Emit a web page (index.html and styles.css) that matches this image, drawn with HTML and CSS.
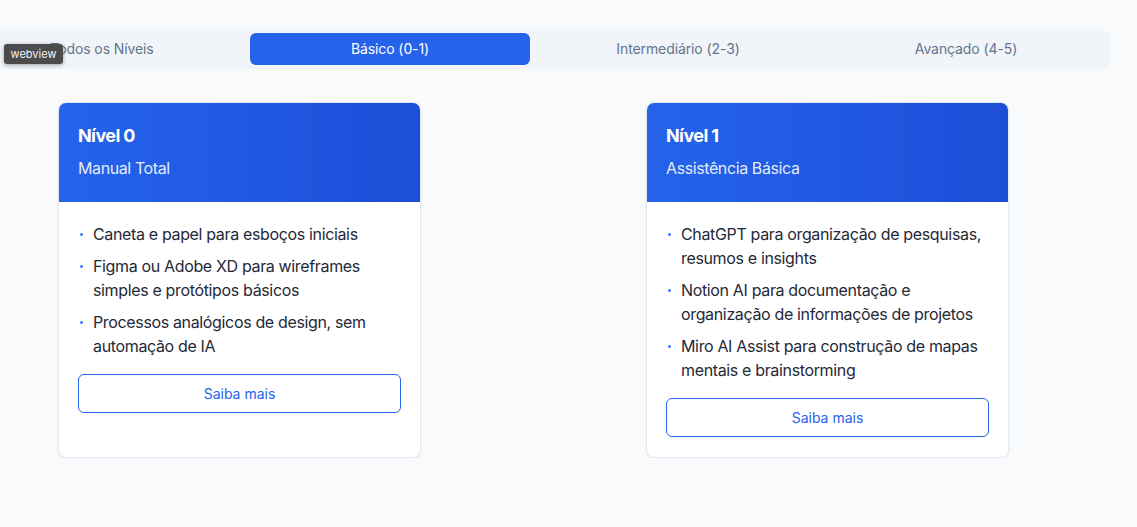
FILE: index.html
```html
<!DOCTYPE html>
<html lang="pt-BR">
<head>
<meta charset="utf-8">
<title>Níveis</title>
<link rel="stylesheet" href="styles.css">
</head>
<body>
<div class="page">
  <nav class="tabs">
    <button class="tab">Todos os Níveis</button>
    <button class="tab active">Básico (0-1)</button>
    <button class="tab">Intermediário (2-3)</button>
    <button class="tab">Avançado (4-5)</button>
  </nav>
  <span class="badge">webview</span>
  <section class="cards">
    <article class="card">
      <header class="card-head">
        <h2 class="card-title">Nível 0</h2>
        <p class="card-sub">Manual Total</p>
      </header>
      <div class="card-body">
        <ul class="list">
          <li>Caneta e papel para esboços iniciais</li>
          <li>Figma ou Adobe XD para wireframes simples e protótipos básicos</li>
          <li>Processos analógicos de design, sem automação de IA</li>
        </ul>
        <button class="more">Saiba mais</button>
      </div>
    </article>
    <article class="card">
      <header class="card-head">
        <h2 class="card-title">Nível 1</h2>
        <p class="card-sub">Assistência Básica</p>
      </header>
      <div class="card-body">
        <ul class="list">
          <li>ChatGPT para organização de pesquisas, resumos e insights</li>
          <li>Notion AI para documentação e organização de informações de projetos</li>
          <li>Miro AI Assist para construção de mapas mentais e brainstorming</li>
        </ul>
        <button class="more">Saiba mais</button>
      </div>
    </article>
  </section>
</div>
</body>
</html>
```

FILE: styles.css
```css
* { box-sizing: border-box; }
html, body {
  margin: 0;
  padding: 0;
  background: #f8fafc;
  font-family: Inter, "Noto Sans", sans-serif;
  overflow: hidden;
}
.page {
  position: relative;
  padding-top: 29px;
}
.tabs {
  display: flex;
  gap: 8px;
  width: 1152px;
  margin-left: -42px;
  padding: 4px;
  background: #f1f5f9;
  border-radius: 8px;
}
.tab {
  flex: 1;
  height: 32px;
  padding: 0 0 2px;
  border: 0;
  border-radius: 6px;
  background: transparent;
  font-family: inherit;
  font-size: 14px;
  letter-spacing: -0.1px;
  color: #64748b;
  cursor: pointer;
}
.tab.active {
  background: #2563eb;
  color: #ffffff;
}
.badge {
  position: absolute;
  left: 4px;
  top: 44px;
  width: 59px;
  height: 20px;
  line-height: 20px;
  text-align: center;
  background: #4b4b4b;
  color: #f2f2f2;
  font-size: 11px;
  border-radius: 3px;
  box-shadow: 0 1px 4px rgba(0,0,0,0.35);
}
.cards {
  display: grid;
  grid-template-columns: 363px 363px;
  column-gap: 225px;
  align-items: stretch;
  margin-top: 33px;
  padding-left: 58px;
}
.card {
  display: flex;
  flex-direction: column;
  background: #ffffff;
  border: 1px solid #e2e8f0;
  border-radius: 8px;
  overflow: hidden;
  box-shadow: 0 1px 3px rgba(15, 23, 42, 0.06);
}
.card-head {
  height: 100px;
  margin: -1px -1px 0;
  padding: 20px 20px 0;
  background: linear-gradient(90deg, #2563eb 0%, #1d4ed8 100%);
  color: #ffffff;
}
.card-title {
  margin: 0;
  font-size: 18px;
  line-height: 28px;
  font-weight: 700;
  letter-spacing: -0.6px;
}
.card-sub {
  margin: 6px 0 0;
  font-size: 16px;
  line-height: 24px;
  letter-spacing: -0.4px;
  color: rgba(255,255,255,0.9);
}
.card-body {
  padding: 20px 19px 20px 19px;
}
.list {
  list-style: none;
  margin: 0;
  padding: 0;
  display: flex;
  flex-direction: column;
  gap: 8px;
}
.list li {
  position: relative;
  padding-left: 15px;
  font-size: 16px;
  line-height: 24px;
  letter-spacing: -0.35px;
  color: #1f2937;
}
.list li::before {
  content: "";
  position: absolute;
  left: 2px;
  top: 11px;
  width: 3px;
  height: 3px;
  border-radius: 50%;
  background: #3b82f6;
}
.more {
  display: block;
  width: 100%;
  margin-top: 16px;
  padding: 8px 0;
  line-height: 21px;
  border: 1px solid #2563eb;
  border-radius: 6px;
  background: #ffffff;
  color: #2563eb;
  font-family: inherit;
  font-size: 14px;
  cursor: pointer;
}
```
